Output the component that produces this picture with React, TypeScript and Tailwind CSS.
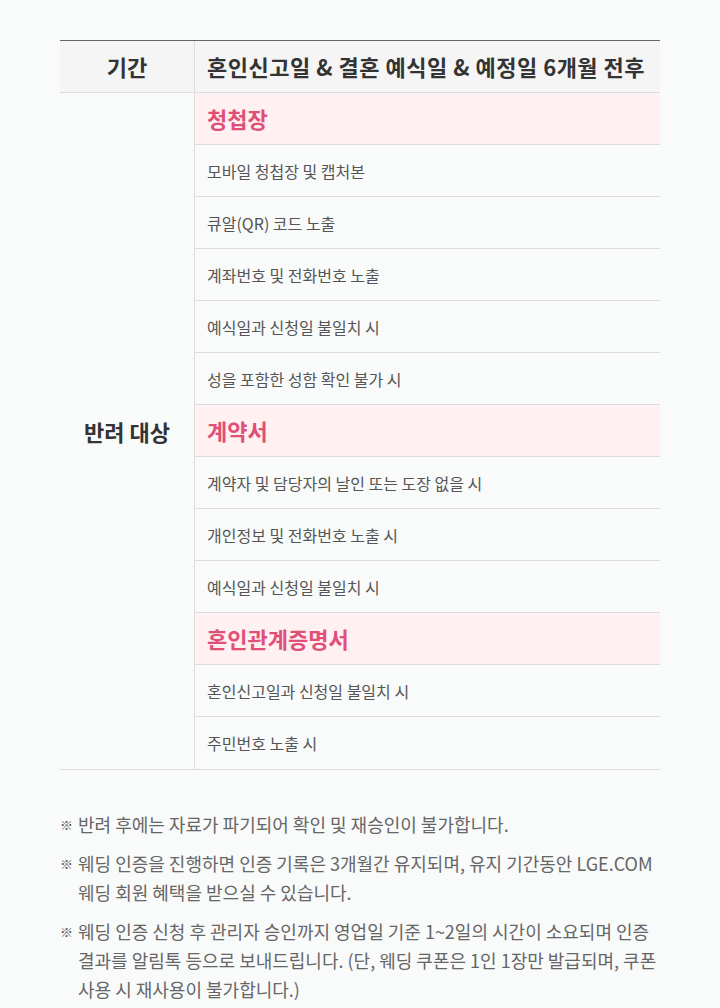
import React from "react";

type Row = { t: string; h?: boolean };

const rows: Row[] = [
  { t: "청첩장", h: true },
  { t: "모바일 청첩장 및 캡처본" },
  { t: "큐알(QR) 코드 노출" },
  { t: "계좌번호 및 전화번호 노출" },
  { t: "예식일과 신청일 불일치 시" },
  { t: "성을 포함한 성함 확인 불가 시" },
  { t: "계약서", h: true },
  { t: "계약자 및 담당자의 날인 또는 도장 없을 시" },
  { t: "개인정보 및 전화번호 노출 시" },
  { t: "예식일과 신청일 불일치 시" },
  { t: "혼인관계증명서", h: true },
  { t: "혼인신고일과 신청일 불일치 시" },
  { t: "주민번호 노출 시" },
];

const notes = [
  "반려 후에는 자료가 파기되어 확인 및 재승인이 불가합니다.",
  "웨딩 인증을 진행하면 인증 기록은 3개월간 유지되며, 유지 기간동안 LGE.COM 웨딩 회원 혜택을 받으실 수 있습니다.",
  "웨딩 인증 신청 후 관리자 승인까지 영업일 기준 1~2일의 시간이 소요되며 인증 결과를 알림톡 등으로 보내드립니다. (단, 웨딩 쿠폰은 1인 1장만 발급되며, 쿠폰 사용 시 재사용이 불가합니다.)",
];

export default function App() {
  return (
    <div
      className="min-h-[1008px] w-[720px] bg-[#f9fafa] px-[60px] pt-[40px]"
      style={{ fontFamily: '"Noto Sans CJK KR", "Noto Sans", sans-serif' }}
    >
      <div className="border-t border-[#666666]">
        <div className="flex h-[52px] border-b border-[#dddddd] bg-[#f5f5f5]">
          <div className="flex w-[135px] items-center justify-center border-r border-[#dddddd] text-[22px] font-semibold text-[#333333]">
            기간
          </div>
          <div className="flex flex-1 items-center pl-[12px] text-[22px] font-semibold tracking-[0.5px] text-[#333333]">
            혼인신고일 &amp; 결혼 예식일 &amp; 예정일 6개월 전후
          </div>
        </div>
        <div className="flex border-b border-[#dddddd]">
          <div className="flex w-[135px] items-center justify-center border-r border-[#dddddd] text-[22px] font-semibold text-[#333333]">
            반려 대상
          </div>
          <div className="flex flex-1 flex-col">
            {rows.map((r, i) => (
              <div
                key={i}
                className={
                  r.h
                    ? "flex h-[52px] items-center border-b border-[#dddddd] bg-[#fff0f1] pl-[12px] text-[22px] font-semibold text-[#e04f77] last:border-b-0"
                    : "flex h-[52px] items-center border-b border-[#dddddd] pl-[12px] text-[16px] text-[#555555] last:border-b-0"
                }
              >
                {r.t}
              </div>
            ))}
          </div>
        </div>
      </div>
      <div className="mt-[40px] flex flex-col gap-[10px]">
        {notes.map((n, i) => (
          <div key={i} className="flex text-[18px] leading-[29px] text-[#666666]">
            <span className="w-[18px] shrink-0 text-[13px] font-bold text-[#555555]">※</span>
            <span>{n}</span>
          </div>
        ))}
      </div>
    </div>
  );
}
